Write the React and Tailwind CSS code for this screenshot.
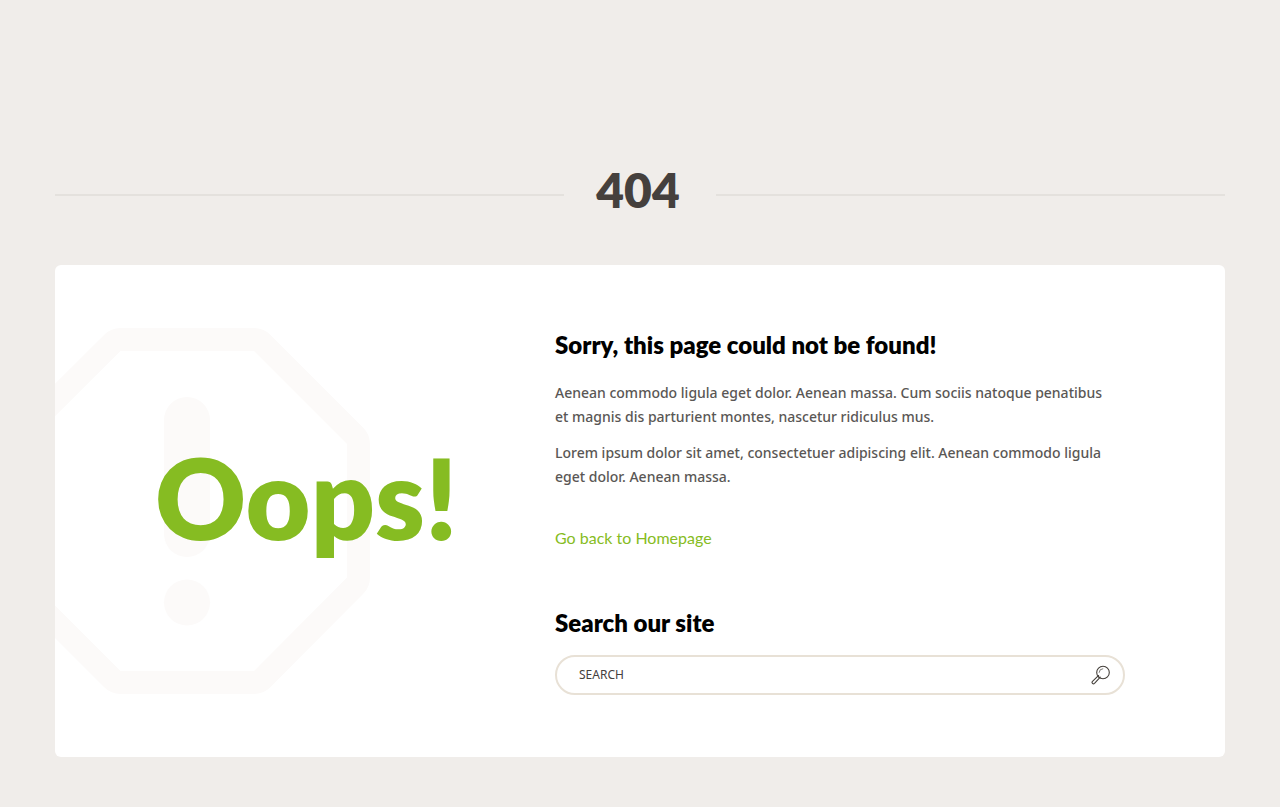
function StopSign() {
  return (
    <svg
      aria-hidden="true"
      viewBox="0 0 366 366"
      className="absolute -left-[51px] top-[63px] h-[366px] w-[366px]"
    >
      <path
        d="M116.500 23H250L343 116V249.500L250 343H116.500L23 249.500V116Z"
        fill="#ffffff"
        stroke="#fcfaf9"
        strokeWidth="46"
        strokeLinejoin="round"
        style={{ paintOrder: 'stroke' }}
      />
      <rect x="160" y="69" width="46" height="160" rx="23" fill="#fcfaf9" />
      <circle cx="183" cy="274.500" r="23" fill="#fcfaf9" />
    </svg>
  );
}

function SearchIcon() {
  return (
    <svg
      aria-hidden="true"
      viewBox="0 0 20 20"
      className="h-5 w-5"
      fill="none"
      stroke="#45403b"
      strokeLinecap="round"
      strokeLinejoin="round"
    >
      <circle cx="12" cy="7.500" r="6.300" strokeWidth="1.100" />
      <path d="M8.100 7.400A3.900 3.900 0 0 1 11.800 3.700" strokeWidth="0.700" />
      <path
        d="M6.900 11.100L1.500 16.300A1.400 1.400 0 0 0 3.500 18.300L8.600 12.800L6.900 11.100L7.600 10.500M8.600 12.800L9.200 12.200"
        strokeWidth="1.100"
      />
    </svg>
  );
}

export default function App() {
  return (
    <div className="min-h-screen bg-[#f0edea] px-[55px] pb-[50px] pt-[160px] font-['Lato',sans-serif]">
      <header className="flex items-center">
        <div className="h-[2px] flex-1 bg-[#e4e1dd]" />
        <h1 className="w-[152px] pb-[10px] pr-1 text-center text-5xl/[60px] font-extrabold text-[#45403d]">
          404
        </h1>
        <div className="h-[2px] flex-1 bg-[#e4e1dd]" />
      </header>

      <main className="relative mt-[35px] flex overflow-hidden rounded-md bg-white pb-[62px] pl-[100px] pr-[100px] pt-[62px]">
        <StopSign />
        <div className="relative flex w-[400px] shrink-0 items-center pb-7">
          <p className="text-[112px] font-extrabold leading-[140px] text-[#86bc22]">Oops!</p>
        </div>

        <div className="relative min-w-0 flex-1">
          <h2 className="text-2xl font-extrabold leading-9 text-black">
            Sorry, this page could not be found!
          </h2>
          <div className="mt-[18px] space-y-3 font-['Noto_Sans',sans-serif] text-sm/6 font-medium text-[#5a5755]">
            <p className="max-w-[560px]">
              Aenean commodo ligula eget dolor. Aenean massa. Cum sociis natoque penatibus et magnis
              dis parturient montes, nascetur ridiculus mus.
            </p>
            <p className="max-w-[560px]">
              Lorem ipsum dolor sit amet, consectetuer adipiscing elit. Aenean commodo ligula eget
              dolor. Aenean massa.
            </p>
          </div>
          <a href="#home" className="mt-[37px] block w-fit text-base leading-6 text-[#86bc22]">
            Go back to Homepage
          </a>

          <h2 className="mt-[55px] text-2xl font-extrabold leading-9 text-black">
            <label htmlFor="site-search">Search our site</label>
          </h2>
          <form
            role="search"
            onSubmit={(event) => event.preventDefault()}
            className="mt-[14px] flex h-10 items-center rounded-full border-2 border-[#e8e1d6] pl-[22px] pr-3"
          >
            <input
              id="site-search"
              type="text"
              placeholder="SEARCH"
              className="min-w-0 flex-1 bg-transparent font-['Noto_Sans',sans-serif] text-xs/5 text-[#45403d] outline-none placeholder:text-[#45403d]"
            />
            <button type="submit" aria-label="Search" className="flex h-5 w-5 items-center">
              <SearchIcon />
            </button>
          </form>
        </div>
      </main>
    </div>
  );
}
